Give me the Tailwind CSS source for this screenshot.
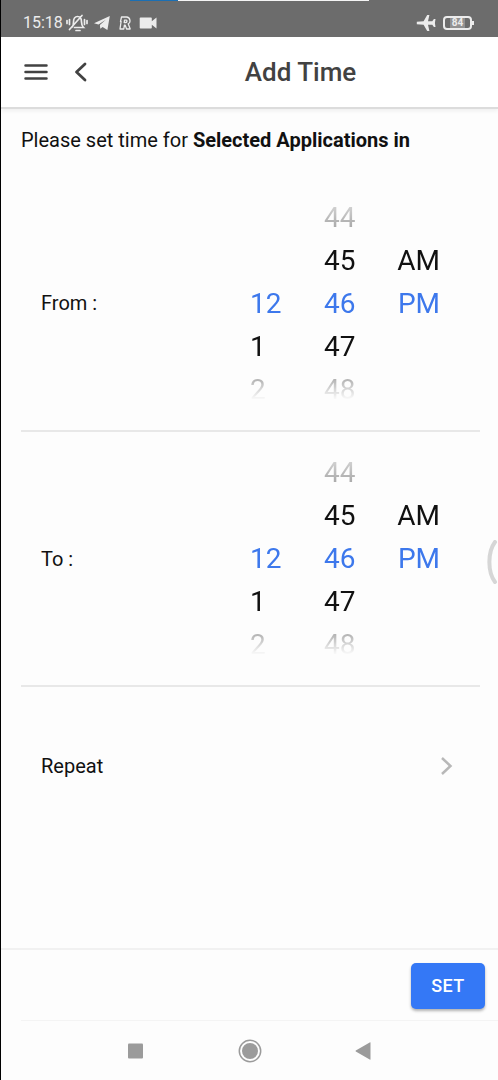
<!DOCTYPE html>
<html lang="en">
<head>
<meta charset="utf-8">
<meta name="viewport" content="width=device-width, initial-scale=1">
<title>Add Time</title>
<script src="https://cdn.jsdelivr.net/npm/@tailwindcss/browser@4"></script>
</head>
<body class="bg-[#fdfdfd] font-['Roboto',sans-serif] text-[#111]">
<div class="relative flex min-h-screen flex-col border-l border-black">

  <!-- Status bar -->
  <div class="relative flex h-[37px] shrink-0 items-center bg-[#6c6c6c] pt-2 pr-6 pl-[22px] text-[#ececec]">
    <div class="absolute top-0 left-[26%] flex h-px w-[48%]">
      <span class="w-1/5 bg-[#1b6fb3]"></span><span class="grow bg-[#f4f4f4]"></span>
    </div>
    <span class="text-[16px] leading-5">15:18</span>
    <svg class="ml-[3px] h-[18px] w-[22px]" viewBox="0 0 22 18" fill="none" stroke="currentColor" stroke-width="1.700" stroke-linecap="round">
      <path d="M6 13c1.500-1.200 1.500-2.500 1.500-5C7.500 4.500 9 2.500 11.500 2.500S15.500 4.500 15.500 8c0 2.500.5 4 2 5.500H8.500M10 16.500h4M3.500 15.500 16 1.500M3.500 5.500v5M1 6.500v3M18.500 5.500v5M21 6.500v3"/>
    </svg>
    <svg class="ml-[6px] h-4 w-4" viewBox="0 0 16 16" fill="currentColor"><path d="M0 8.200 15.800 1 13.400 15 8.600 12 6.300 13.800 5.900 10 11.800 4.800 4.500 9.600z"/></svg>
    <svg class="ml-[9px] h-4 w-3" viewBox="0 0 12 16" fill="none" stroke="currentColor" stroke-width="1.300" stroke-linejoin="round"><path d="M2.500 2h5c4 0 4.500 6 1.700 6.800l2 5.200H7.600L6.200 10.200H5.400L4.800 14H1L2.100 6.500H1.500zM5.500 5.200h1.800c1 0 .8 2.300-.3 2.300H5.200z"/></svg>
    <svg class="ml-[8px] h-4 w-[18px]" viewBox="0 0 18 16" fill="currentColor"><path d="M1.500 2.500h10.500a.8.800 0 0 1 .8.800v3L17.500 2.500v11l-4.700-3.800v3a.8.800 0 0 1-.8.800H1.500a.8.800 0 0 1-.8-.8V3.300A.8.800 0 0 1 1.500 2.500z"/></svg>
    <svg class="ml-auto h-[18px] w-5" viewBox="0 0 20 18" fill="currentColor"><path d="M.8 7.800 7.600 7.300 11.200 1h2.200L12 7.300h4.300l1.600-2.300h1.600L18.900 9l.6 4h-1.600l-1.600-2.300H12L13.400 17h-2.200L7.600 10.700.8 10.200z"/></svg>
    <div class="ml-[7px] flex h-[14px] w-[29px] items-center justify-center rounded-[4px] border-2 border-current text-[10px] leading-none font-bold"><span class="bg-[#929292] px-0.5">84</span></div>
    <span class="h-1 w-0.5 bg-current"></span>
  </div>

  <!-- Toolbar -->
  <header class="grid h-[72px] shrink-0 grid-cols-[102px_1fr] items-center border-b-2 border-[#dcdcdc] bg-white text-[#424242] shadow-[0_2px_4px_rgba(0,0,0,0.06)]">
    <div class="flex items-center gap-[18px] pl-[23px]">
      <button type="button" aria-label="Menu" class="block">
        <svg class="h-6 w-6" viewBox="0 0 24 24" fill="none" stroke="currentColor" stroke-width="2.500" stroke-linecap="round"><path d="M1.500 5.600h21M1.500 12h21M1.500 18.400h21"/></svg>
      </button>
      <button type="button" aria-label="Back" class="block">
        <svg class="h-6 w-6" viewBox="0 0 24 24" fill="none" stroke="currentColor" stroke-width="2.800" stroke-linecap="round" stroke-linejoin="round"><path d="M19 4 10.500 12l8.500 8"/></svg>
      </button>
    </div>
    <h1 class="text-center text-[26px] leading-8 font-medium">Add Time</h1>
  </header>

  <main class="flex grow flex-col pr-[18px] pl-5">
    <p class="mt-[17px] text-[20px] leading-7">Please set time for <b>Selected Applications in</b></p>

    <section class="mt-[22px] flex h-[256px] items-center border-b-2 border-[#e8e8e8] pr-10 pl-5" aria-label="From">
      <span class="grow text-[20px] leading-7">From :</span>
      <div class="grid grid-cols-[74px_73px_43px] text-[28px] leading-[43px] [mask-image:linear-gradient(to_bottom,rgba(0,0,0,0.1),rgba(0,0,0,0.42)_40px,#000_43px,#000_172px,rgba(0,0,0,0.42)_176px,transparent_204px)]">
        <div class="flex flex-col items-start pt-[86px]">
          <button type="button" aria-pressed="true" class="text-[#3d78ec]">12</button>
          <button type="button">1</button>
          <button type="button">2</button>
        </div>
        <div class="flex flex-col items-start">
          <button type="button">44</button>
          <button type="button">45</button>
          <button type="button" aria-pressed="true" class="text-[#3d78ec]">46</button>
          <button type="button">47</button>
          <button type="button">48</button>
        </div>
        <div class="flex flex-col items-end pt-[43px]">
          <button type="button">AM</button>
          <button type="button" aria-pressed="true" class="text-[#3d78ec]">PM</button>
        </div>
      </div>
    </section>

    <section class="flex h-[255px] items-center border-b-2 border-[#e8e8e8] pr-10 pl-5" aria-label="To">
      <span class="grow text-[20px] leading-7">To :</span>
      <div class="grid grid-cols-[74px_73px_43px] text-[28px] leading-[43px] [mask-image:linear-gradient(to_bottom,rgba(0,0,0,0.1),rgba(0,0,0,0.42)_40px,#000_43px,#000_172px,rgba(0,0,0,0.42)_176px,transparent_204px)]">
        <div class="flex flex-col items-start pt-[86px]">
          <button type="button" aria-pressed="true" class="text-[#3d78ec]">12</button>
          <button type="button">1</button>
          <button type="button">2</button>
        </div>
        <div class="flex flex-col items-start">
          <button type="button">44</button>
          <button type="button">45</button>
          <button type="button" aria-pressed="true" class="text-[#3d78ec]">46</button>
          <button type="button">47</button>
          <button type="button">48</button>
        </div>
        <div class="flex flex-col items-end pt-[43px]">
          <button type="button">AM</button>
          <button type="button" aria-pressed="true" class="text-[#3d78ec]">PM</button>
        </div>
      </div>
    </section>

    <button type="button" class="mt-[50px] flex h-[57px] items-center justify-between pr-6 pl-5 text-[20px] leading-7">
      Repeat
      <svg class="h-5 w-5" viewBox="0 0 20 20" fill="none" stroke="#b8b8b8" stroke-width="2.500"><path d="m6 2 8.500 8-8.500 8"/></svg>
    </button>
  </main>

  <footer class="flex h-[72px] shrink-0 items-center justify-end border-t-2 border-[#f1f1f1] pt-0.5 pr-[13px]">
    <button type="button" class="h-[46px] w-[74px] rounded-[5px] bg-[#3478f6] text-[18px] leading-6 font-medium tracking-wide text-white shadow-[0_2px_3px_rgba(0,0,0,0.3)]">SET</button>
  </footer>

  <!-- System navigation -->
  <nav class="ml-5 h-[60px] shrink-0 border-t border-[#f4f4f4]" aria-label="System">
    <div class="-ml-5 flex h-full items-center justify-center gap-[90px] text-[#9b9b9b]">
      <button type="button" aria-label="Recent apps"><svg class="h-6 w-6" viewBox="0 0 24 24" fill="currentColor"><rect x="4" y="4.500" width="15" height="15" rx="1"/></svg></button>
      <button type="button" aria-label="Home"><svg class="h-6 w-6" viewBox="0 0 24 24"><circle cx="12" cy="12" r="10.700" fill="none" stroke="currentColor" stroke-width="1.500"/><circle cx="12" cy="12" r="8" fill="currentColor"/></svg></button>
      <button type="button" aria-label="Go back"><svg class="h-6 w-6" viewBox="0 0 24 24" fill="currentColor"><path d="M18.500 3.800v16.400a.5.500 0 0 1-.8.400L3.800 12.400a.5.500 0 0 1 0-.8L17.700 3.400a.5.500 0 0 1 .8.400z"/></svg></button>
    </div>
  </nav>

  <!-- Edge handle -->
  <svg class="absolute top-1/2 right-0 h-11 w-3" viewBox="0 0 12 44" fill="none" stroke="#d6d6d6" stroke-width="4" stroke-linecap="round"><path d="M9 2C1.500 12 1.500 32 9 42"/></svg>
</div>
</body>
</html>
